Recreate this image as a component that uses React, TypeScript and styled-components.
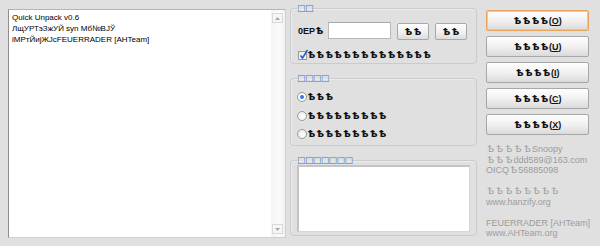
import React from 'react';
import styled, { createGlobalStyle } from 'styled-components';

const Global = createGlobalStyle`
  html, body { margin: 0; padding: 0; background: #e0e0e0; }
  body { width: 600px; height: 246px; overflow: hidden; font-family: "Liberation Sans", Arial, sans-serif; }
`;

const Window = styled.div`
  display: flex;
  align-items: flex-start;
  width: 600px;
  height: 246px;
  background: #e0e0e0;
`;

const LogBox = styled.div`
  margin: 9px 0 0 8px;
  width: 278px;
  height: 229px;
  box-sizing: border-box;
  background: #fff;
  border: 1px solid #cfcfcf;
  border-top-color: #b4b4b4;
  border-left-color: #8e8e8e;
  display: flex;
`;

const LogText = styled.div`
  flex: 1;
  padding: 2px 0 0 3px;
  font: 8px/11px "Liberation Sans", Arial, sans-serif;
  color: #000;
  white-space: pre;
`;

const ScrollBar = styled.div`
  width: 14px;
  box-sizing: border-box;
  display: flex;
  flex-direction: column;
  justify-content: space-between;
  padding: 3px 1px 3px 1px;
  background: linear-gradient(to right, #f3f3f3, #fbfbfb 60%, #f1f1f1);
`;

const ScrollBtn = styled.div`
  width: 11px;
  height: 10px;
  box-sizing: border-box;
  border: 1px solid #d9d9d9;
  background: #f6f6f6;
  display: flex;
  align-items: center;
  justify-content: center;
`;

const Middle = styled.div`
  width: 187px;
  margin-left: 4px;
  padding-top: 4px;
  display: flex;
  flex-direction: column;
  gap: 10px;
`;

const Group = styled.fieldset<{ $h: number }>`
  margin: 0;
  padding: 0 6px;
  min-width: 0;
  height: ${(p) => p.$h}px;
  box-sizing: border-box;
  border: 1px solid #cbcbcb;
  border-radius: 4px;
  box-shadow: inset 1px 1px 0 #ececec;
  display: flex;
  flex-direction: column;
`;

const Legend = styled.legend`
  padding: 0;
  font: bold 9px/9px "DejaVu Sans", sans-serif;
  color: #3f72dc;
  letter-spacing: -0.6px;
`;

const Row = styled.div<{ $mt: number }>`
  display: flex;
  align-items: center;
  margin-top: ${(p) => p.$mt}px;
`;

const BoldLabel = styled.span`
  font: bold 9px "Liberation Sans", Arial, sans-serif;
  color: #111;
  white-space: nowrap;
`;

const Glyph = styled.span<{ $w: number }>`
  display: inline-block;
  width: ${(p) => p.$w}px;
  text-align: center;
  font-family: "DejaVu Sans", sans-serif;
`;

const FieldLabel = styled(BoldLabel)`
  width: 30px;
  padding-left: 1px;
`;

const TextField = styled.div`
  width: 63px;
  height: 17px;
  box-sizing: border-box;
  background: #fff;
  border: 1px solid #b9b9b9;
  border-top-color: #a9a9a9;
`;

const SmallButton = styled.div`
  width: 32px;
  height: 17px;
  box-sizing: border-box;
  margin-left: 6px;
  margin-top: 2px;
  border: 1px solid #a9a9a9;
  border-radius: 2px;
  background: linear-gradient(#fefefe, #f0f0f0 55%, #dcdcdc);
  display: flex;
  align-items: center;
  justify-content: center;
  font: bold 9px "Liberation Sans", Arial, sans-serif;
  color: #111;
`;

const CheckBox = styled.span`
  width: 9px;
  height: 9px;
  box-sizing: border-box;
  margin: 0 0 0 1px;
  border: 1px solid #9a9a9a;
  background: linear-gradient(135deg, #e6e6e6, #ffffff);
  position: relative;
  display: inline-block;
`;

const CheckMark = styled.svg`
  position: absolute;
  left: 0;
  top: -3px;
`;

const RadioList = styled.div`
  display: flex;
  flex-direction: column;
  gap: 8.5px;
  margin-top: 9px;
`;

const RadioRow = styled.div`
  display: flex;
  align-items: center;
  height: 10px;
`;

const Radio = styled.span<{ $on?: boolean }>`
  width: 10px;
  height: 10px;
  box-sizing: border-box;
  border-radius: 50%;
  border: 1px solid #9c9c9c;
  background: ${(p) =>
    p.$on
      ? 'radial-gradient(circle, #2f6fe0 0, #4a86f0 1.6px, #ffffff 2.4px, #f4f4f4 4px)'
      : 'radial-gradient(circle at 60% 60%, #ffffff 0, #ececec 5px)'};
`;

const Memo = styled.div`
  margin-top: 0;
  height: 67px;
  box-sizing: border-box;
  background: #fff;
  border: 2px solid #c4c4c4;
  border-right-width: 1px;
  border-bottom-width: 1px;
  border-right-color: #d6d6d6;
  border-bottom-color: #d6d6d6;
`;

const Right = styled.div`
  width: 103px;
  margin-left: 9px;
  padding-top: 10px;
  display: flex;
  flex-direction: column;
  gap: 5px;
`;

const ActionButton = styled.div<{ $default?: boolean }>`
  height: 21px;
  box-sizing: border-box;
  border: 1px solid ${(p) => (p.$default ? '#e9a45b' : '#a7a7a7')};
  border-radius: 2px;
  background: linear-gradient(#fefefe, #f1f1f1 50%, #dadada);
  box-shadow: ${(p) => (p.$default ? 'inset 0 0 0 1px #f6c48e' : 'none')};
  display: flex;
  align-items: center;
  justify-content: center;
  font: bold 9px "Liberation Sans", Arial, sans-serif;
  color: #111;
  white-space: nowrap;
  & u { text-decoration: underline; }
`;

const Credits = styled.div`
  margin-top: 4px;
  font: 9px/10.5px "Liberation Sans", Arial, sans-serif;
  color: #9c9c9c;
  white-space: pre;
`;

const Arrow = ({ up }: { up?: boolean }) => (
  <svg width="5" height="3" viewBox="0 0 5 3">
    <path d={up ? 'M0 3 L2.5 0 L5 3 Z' : 'M0 0 L2.5 3 L5 0 Z'} fill="#a8a8a8" />
  </svg>
);

const G = 'Ѣ';
const Mj = ({ n, w = 8.9 }: { n: number; w?: number }) => (
  <>
    {Array.from({ length: n }, (_, i) => (
      <Glyph key={i} $w={w}>{G}</Glyph>
    ))}
  </>
);

export default function App() {
  return (
    <>
      <Global />
      <Window>
        <LogBox>
          <LogText>
            {'Quick Unpack v0.6\nЛщУРТэЗжУЙ syn Мб№ВJЎ\niMPтЙиjЖJcFEUERRADER [AHTeam]'}
          </LogText>
          <ScrollBar>
            <ScrollBtn><Arrow up /></ScrollBtn>
            <ScrollBtn><Arrow /></ScrollBtn>
          </ScrollBar>
        </LogBox>

        <Middle>
          <Group $h={60}>
            <Legend>□□</Legend>
            <Row $mt={8}>
              <FieldLabel>0EP<Mj n={1} /></FieldLabel>
              <TextField />
              <SmallButton><Mj n={2} /></SmallButton>
              <SmallButton><Mj n={2} /></SmallButton>
            </Row>
            <Row $mt={10}>
              <CheckBox>
                <CheckMark width="10" height="11" viewBox="0 0 10 11">
                  <path d="M1.5 6.5 L3.5 9 L8.5 1" stroke="#2a5fd0" strokeWidth="1.6" fill="none" />
                </CheckMark>
              </CheckBox>
              <BoldLabel><Mj n={14} /></BoldLabel>
            </Row>
          </Group>

          <Group $h={72}>
            <Legend>□□□□</Legend>
            <RadioList>
              <RadioRow><Radio $on /><BoldLabel><Mj n={3} /></BoldLabel></RadioRow>
              <RadioRow><Radio /><BoldLabel><Mj n={9} /></BoldLabel></RadioRow>
              <RadioRow><Radio /><BoldLabel><Mj n={9} /></BoldLabel></RadioRow>
            </RadioList>
          </Group>

          <Group $h={80}>
            <Legend>□□□□□□□</Legend>
            <Memo />
          </Group>
        </Middle>

        <Right>
          <ActionButton $default><Mj n={4} />(<u>O</u>)</ActionButton>
          <ActionButton><Mj n={4} />(<u>U</u>)</ActionButton>
          <ActionButton><Mj n={4} />(<u>I</u>)</ActionButton>
          <ActionButton><Mj n={4} />(<u>C</u>)</ActionButton>
          <ActionButton><Mj n={4} />(<u>X</u>)</ActionButton>
          <Credits>
            <Mj n={5} w={9.2} />Snoopy{'\n'}
            <Mj n={3} w={9.2} />ddd589@163.com{'\n'}
            OICQ<Mj n={1} w={9.2} />56885098{'\n\n'}
            <Mj n={8} w={9.2} />{'\n'}
            www.hanzify.org{'\n\n'}
            FEUERRADER [AHTeam]{'\n'}
            www.AHTeam.org
          </Credits>
        </Right>
      </Window>
    </>
  );
}
